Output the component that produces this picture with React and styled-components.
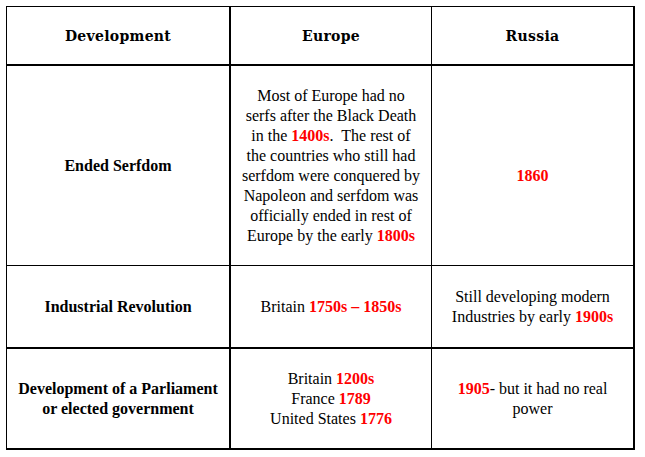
import React from "react";
import styled, { createGlobalStyle } from "styled-components";

const Global = createGlobalStyle`
  html, body { margin: 0; padding: 0; background: #fff; }
  body { padding: 6px 0 0 6px; color: #000; }
`;

const SERIF = `"Liberation Serif", "Times New Roman", Tinos, "Nimbus Roman", "Nimbus Roman No9 L", FreeSerif, "Noto Serif", "DejaVu Serif", Georgia, serif`;

const Table = styled.div`
  display: grid;
  grid-template-columns: 224px 201px 201px;
  grid-template-rows: 59px 200px 83px 99px;
  width: 629px;
  box-sizing: border-box;
  border-top: 1px solid #000;
  border-left: 1px solid #000;
  border-right: 2px solid #000;
  border-bottom: 2px solid #000;
`;

const Cell = styled.div`
  box-sizing: border-box;
  display: flex;
  flex-direction: column;
  align-items: center;
  justify-content: center;
  text-align: center;
  padding: 0 7px;
  font-family: ${SERIF};
  font-size: 16px;
  line-height: 20px;
  font-weight: ${(p) => (p.$bold ? 700 : 400)};
  border-right: ${(p) => p.$right || 0}px solid #000;
  border-bottom: ${(p) => p.$bottom || 0}px solid #000;
`;

const HeadCell = styled(Cell)`
  font-family: "DejaVu Serif", "Noto Serif", ${SERIF};
  font-weight: 700;
  font-size: 14px;
  letter-spacing: 0.3px;
`;

const Line = styled.span`
  display: block;
  white-space: pre;
  min-height: 20px;
`;

const Red = styled.span`
  color: #ff0000;
  font-weight: 700;
`;

const colBorder = [2, 1, 0];

export default function App() {
  const rows = [
    {
      bottom: 1,
      cells: [
        <Line>Ended Serfdom</Line>,
        <>
          <Line>Most of Europe had no</Line>
          <Line>serfs after the Black Death</Line>
          <Line>
            in the <Red>1400s</Red>.{"  "}The rest of
          </Line>
          <Line>the countries who still had</Line>
          <Line>serfdom were conquered by</Line>
          <Line>Napoleon and serfdom was</Line>
          <Line>officially ended in rest of</Line>
          <Line>
            Europe by the early <Red>1800s</Red>
          </Line>
        </>,
        <>
          <Line> </Line>
          <Line>
            <Red>1860</Red>
          </Line>
        </>,
      ],
    },
    {
      bottom: 2,
      cells: [
        <Line>Industrial Revolution</Line>,
        <Line>
          Britain <Red>1750s – 1850s</Red>
        </Line>,
        <>
          <Line>Still developing modern</Line>
          <Line>
            Industries by early <Red>1900s</Red>
          </Line>
        </>,
      ],
    },
    {
      bottom: 0,
      cells: [
        <>
          <Line>Development of a Parliament</Line>
          <Line>or elected government</Line>
        </>,
        <>
          <Line>
            Britain <Red>1200s</Red>
          </Line>
          <Line>
            France <Red>1789</Red>
          </Line>
          <Line>
            United States <Red>1776</Red>
          </Line>
        </>,
        <>
          <Line>
            <Red>1905</Red>- but it had no real
          </Line>
          <Line>power</Line>
        </>,
      ],
    },
  ];

  return (
    <>
      <Global />
      <Table>
        {["Development", "Europe", "Russia"].map((h, i) => (
          <HeadCell key={h} $right={colBorder[i]} $bottom={2}>
            {h}
          </HeadCell>
        ))}
        {rows.map((r, ri) =>
          r.cells.map((c, ci) => (
            <Cell key={`${ri}-${ci}`} $right={colBorder[ci]} $bottom={r.bottom} $bold={ci === 0}>
              {c}
            </Cell>
          ))
        )}
      </Table>
    </>
  );
}
